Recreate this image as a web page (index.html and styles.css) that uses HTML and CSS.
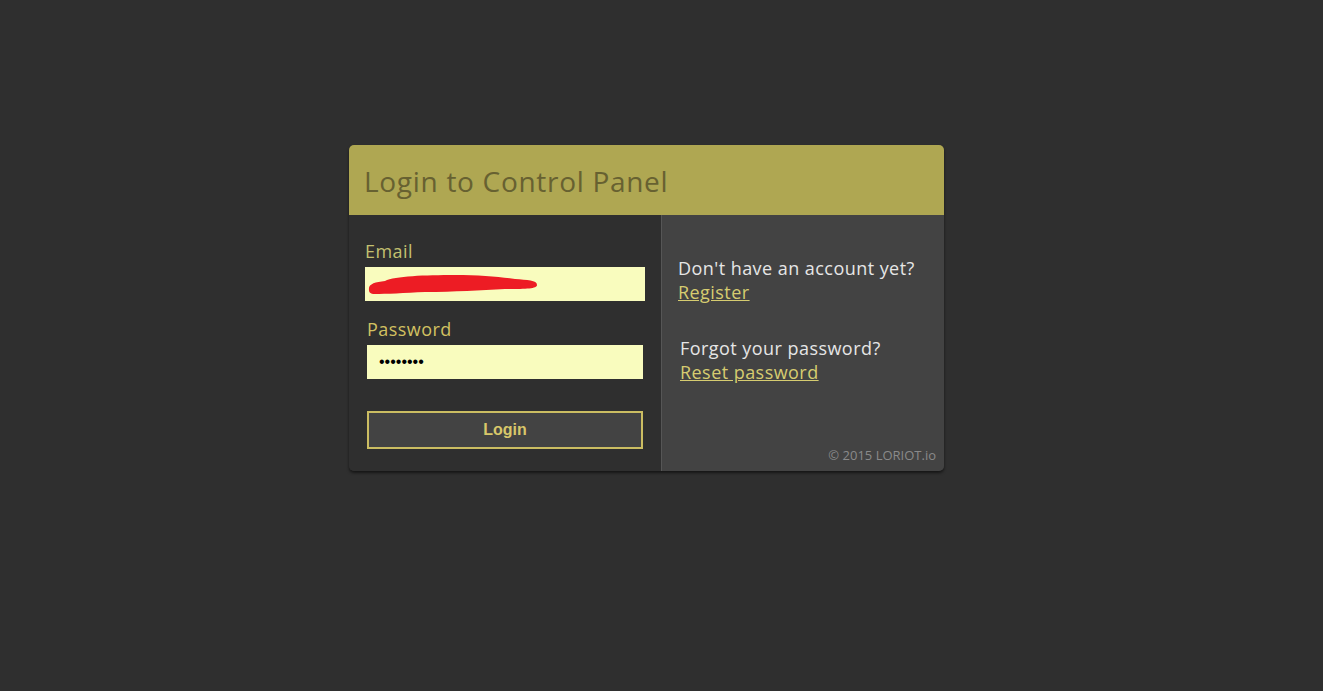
FILE: index.html
```html
<!DOCTYPE html>
<html>
<head>
<meta charset="utf-8">
<link rel="stylesheet" href="styles.css">
</head>
<body>
<div class="page">
  <div class="card">
    <div class="card-header">Login to Control Panel</div>
    <div class="card-body">
      <form class="login-pane">
        <label class="field-label email-label">Email</label>
        <div class="input-wrap">
          <input class="text-input email-input" type="text" value="">
          <svg class="redact" width="176" height="26" viewBox="0 0 176 26"><path d="M4 20 C3 14 10 12 20 11 C30 6 60 5 90 5 C115 5 135 7 150 9 C162 10 172 10 172 15 C172 19 160 19 140 19 C115 20 90 22 60 22 C40 23 20 24 10 24 C5 24 4 22 4 20 Z" fill="#ed1c24"/></svg>
        </div>
        <label class="field-label password-label">Password</label>
        <input class="text-input password-input" type="password" value="password">
        <button class="login-btn" type="button">Login</button>
      </form>
      <div class="info-pane">
        <div class="info-block">
          <p class="info-text">Don't have an account yet?</p>
          <a class="info-link" href="#">Register</a>
        </div>
        <div class="info-block second">
          <p class="info-text">Forgot your password?</p>
          <a class="info-link" href="#">Reset password</a>
        </div>
        <div class="copyright">© 2015 LORIOT.io</div>
      </div>
    </div>
  </div>
</div>
</body>
</html>
```
FILE: styles.css
```css
* { box-sizing: border-box; }
html, body { margin: 0; padding: 0; }
body {
  background: #2f2f2f;
  font-family: "Open Sans", "DejaVu Sans", sans-serif;
  width: 1323px;
  height: 691px;
  overflow: hidden;
}
.page {
  padding-top: 145px;
  padding-left: 349px;
}
.card {
  width: 595px;
  border-radius: 5px;
  overflow: hidden;
  box-shadow: 0 2px 3px rgba(0,0,0,0.55);
  background: #2f2f2f;
}
.card-header {
  background: #afa752;
  color: #676131;
  height: 70px;
  padding: 18px 0 0 15px;
  font-size: 28px;
  letter-spacing: 0.7px;
  line-height: 36px;
}
.card-body {
  display: flex;
  height: 256px;
}
.login-pane {
  width: 312px;
  margin: 0;
  padding: 24px 16px 0 16px;
  display: flex;
  flex-direction: column;
  background: #2f2f2f;
}
.field-label {
  font-size: 18px;
  letter-spacing: 0.45px;
  line-height: 24px;
  display: block;
}
.email-label { color: #c3c070; }
.password-label { color: #d2c161; margin: 16px 0 4px 2px; }
.input-wrap {
  position: relative;
  height: 34px;
  margin-top: 4px;
  width: 280px;
}
.text-input {
  border: none;
  outline: none;
  background: #f9fcbe;
  height: 34px;
  width: 280px;
  margin: 0;
  padding: 0 12px;
  font-family: "Liberation Sans", sans-serif;
  font-size: 16px;
  color: #000;
  display: block;
}
.password-input {
  width: 276px;
  margin-left: 2px;
}
.redact {
  position: absolute;
  left: 0;
  top: 3px;
}
.login-btn {
  margin: 32px 0 0 2px;
  width: 276px;
  height: 38px;
  background: #434343;
  border: 2px solid #cbbd62;
  color: #d8c76a;
  font-family: "Liberation Sans", Arial, sans-serif;
  font-weight: bold;
  font-size: 16px;
  padding: 0;
}
.info-pane {
  flex: 1;
  background: #434343;
  border-left: 1px solid #565656;
  position: relative;
  padding: 41px 16px 0 16px;
}
.info-block.second { margin-top: 32px; padding-left: 2px; }
.info-text {
  margin: 0;
  color: #e6e6e6;
  font-size: 18px;
  letter-spacing: 0.45px;
  line-height: 24px;
}
.info-link {
  color: #d6cc70;
  font-size: 18px;
  letter-spacing: 0.45px;
  line-height: 24px;
  text-decoration: underline;
}
.copyright {
  position: absolute;
  right: 8px;
  bottom: 7px;
  color: #8a8a8a;
  font-size: 13px;
}
```
